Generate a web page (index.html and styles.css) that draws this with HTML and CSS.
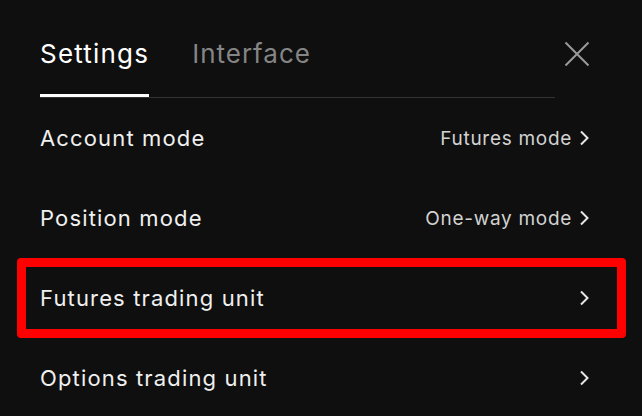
FILE: index.html
```html
<!DOCTYPE html>
<html>
<head>
<meta charset="utf-8">
<link rel="stylesheet" href="styles.css">
</head>
<body>
<div class="panel">
  <div class="header">
    <div class="tabs">
      <div class="tab active">Settings</div>
      <div class="tab">Interface</div>
    </div>
    <button class="close" aria-label="Close">
      <svg width="26" height="26" viewBox="0 0 26 26"><path d="M1.5 1.5L24.5 24.5M24.5 1.5L1.5 24.5" stroke="#9a9a9a" stroke-width="2" fill="none"/></svg>
    </button>
  </div>
  <div class="rows">
    <div class="row">
      <span class="label">Account mode</span>
      <span class="value">Futures mode<svg class="chev" width="11" height="18" viewBox="0 0 11 18"><path d="M2 2.5L8.5 9L2 15.5" stroke="#e6e6e6" stroke-width="2" fill="none"/></svg></span>
    </div>
    <div class="row">
      <span class="label">Position mode</span>
      <span class="value">One-way mode<svg class="chev" width="11" height="18" viewBox="0 0 11 18"><path d="M2 2.5L8.5 9L2 15.5" stroke="#e6e6e6" stroke-width="2" fill="none"/></svg></span>
    </div>
    <div class="row highlighted">
      <span class="label">Futures trading unit</span>
      <span class="value"><svg class="chev" width="11" height="18" viewBox="0 0 11 18"><path d="M2 2.5L8.5 9L2 15.5" stroke="#e6e6e6" stroke-width="2" fill="none"/></svg></span>
    </div>
    <div class="row">
      <span class="label">Options trading unit</span>
      <span class="value"><svg class="chev" width="11" height="18" viewBox="0 0 11 18"><path d="M2 2.5L8.5 9L2 15.5" stroke="#e6e6e6" stroke-width="2" fill="none"/></svg></span>
    </div>
  </div>
</div>
</body>
</html>
```

FILE: styles.css
```css
html, body {
  margin: 0;
  padding: 0;
  background: #0f0f0f;
}
body {
  font-family: Inter, "Noto Sans", sans-serif;
  color: #f2f2f2;
  width: 642px;
  height: 416px;
  overflow: hidden;
}
.panel {
  display: flex;
  flex-direction: column;
}
.header {
  display: flex;
  align-items: flex-start;
  justify-content: space-between;
  padding: 0 52px 0 40px;
}
.tabs {
  display: flex;
  gap: 44px;
  width: 515px;
  border-bottom: 1px solid #333;
  height: 98px;
  box-sizing: border-box;
}
.tab {
  font-size: 26px;
  letter-spacing: 1px;
  color: #858585;
  padding-top: 38px;
  height: 59px;
  box-sizing: border-box;
  line-height: 32px;
}
.tab.active {
  color: #ffffff;
  letter-spacing: 1.2px;
  height: 97px;
  border-bottom: 3px solid #ffffff;
  margin-right: -1px;
}
.close {
  background: none;
  border: 0;
  padding: 0;
  margin-top: 41px;
  width: 26px;
  height: 26px;
  display: flex;
}
.rows {
  display: flex;
  flex-direction: column;
}
.row {
  position: relative;
  height: 80px;
  display: flex;
  align-items: center;
  justify-content: space-between;
  padding: 0 52px 0 40px;
}
.label {
  font-size: 22px;
  letter-spacing: 1.15px;
  color: #f0f0f0;
}
.value {
  display: flex;
  align-items: center;
  gap: 7px;
  font-size: 19px;
  letter-spacing: 0.7px;
  color: #d2d2d2;
}
.chev {
  display: block;
}
.highlighted::after {
  content: "";
  position: absolute;
  left: 17px;
  right: 16px;
  top: 0;
  bottom: 0;
  border: 9px solid #ff0000;
  border-radius: 4px;
}
```
